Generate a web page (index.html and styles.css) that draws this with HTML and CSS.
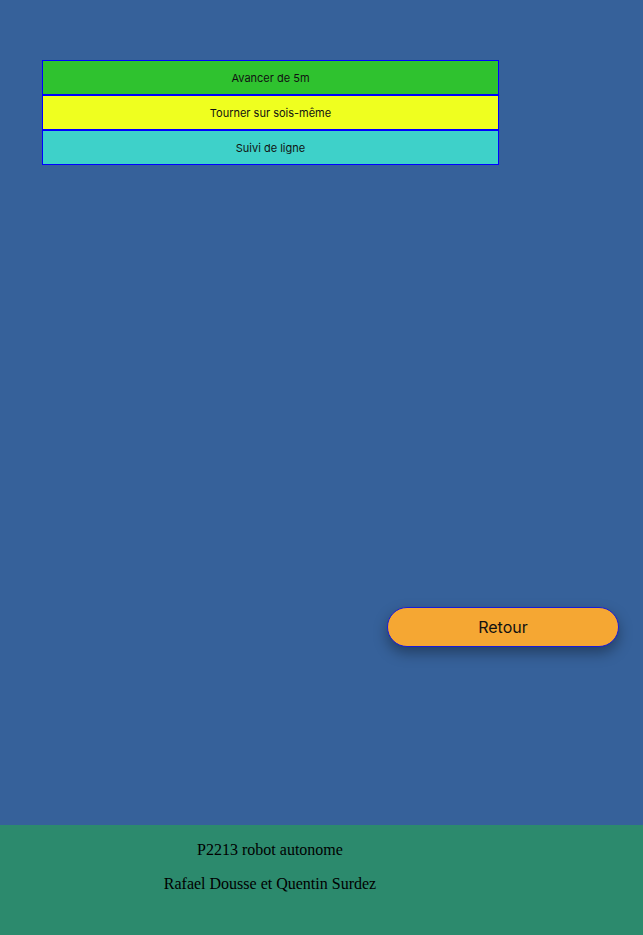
FILE: index.html
```html
<!DOCTYPE html>
<html lang="fr">
<head>
<meta charset="utf-8">
<title>P2213 robot autonome</title>
<link rel="stylesheet" href="styles.css">
</head>
<body>
<main class="main">
  <div class="choices">
    <button class="choice choice-green">Avancer de 5m</button>
    <button class="choice choice-yellow">Tourner sur sois-même</button>
    <button class="choice choice-cyan">Suivi de ligne</button>
  </div>
  <div class="back-row">
    <button class="back">Retour</button>
  </div>
</main>
<footer class="footer">
  <p class="footer-line">P2213 robot autonome</p>
  <p class="footer-line">Rafael Dousse et Quentin Surdez</p>
</footer>
</body>
</html>
```

FILE: styles.css
```css
html, body {
  margin: 0;
  padding: 0;
}
body {
  background: #36619a;
  font-family: "Liberation Serif", "Times New Roman", serif;
}
.main {
  height: 825px;
  box-sizing: border-box;
  padding-top: 60px;
  display: flex;
  flex-direction: column;
}
.choices {
  margin-left: 42px;
  width: 457px;
  display: flex;
  flex-direction: column;
}
.choice {
  height: 35px;
  margin: 0;
  border: 1px solid #0000ff;
  font-family: Inter, "Liberation Sans", sans-serif;
  font-size: 11px;
  color: #111;
  padding: 0;
  text-align: center;
}
.choice-green { background: #2fc22f; }
.choice-yellow { background: #efff1f; }
.choice-cyan { background: #3ed1c9; }
.back-row {
  margin-top: 442px;
  padding-left: 387px;
  display: flex;
}
.back {
  width: 232px;
  height: 40px;
  border: 1px solid #1a1ad8;
  border-radius: 20px;
  background: #f5a733;
  font-family: Inter, "Liberation Sans", sans-serif;
  font-size: 16px;
  color: #111;
  box-shadow: 0 6px 14px rgba(0, 0, 0, 0.35);
}
.footer {
  height: 110px;
  box-sizing: border-box;
  background: #2c8a6d;
  padding-top: 16px;
}
.footer-line {
  margin: 0 0 16px 0;
  width: 540px;
  text-align: center;
  font-size: 16px;
  line-height: 18px;
  color: #000;
}
```
